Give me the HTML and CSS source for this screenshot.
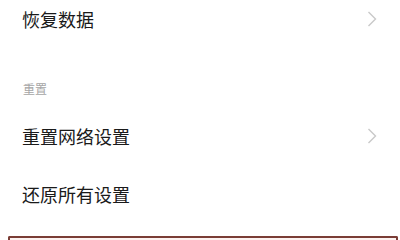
FILE: index.html
```html
<!DOCTYPE html>
<html lang="zh-CN">
<head>
<meta charset="utf-8">
<link rel="stylesheet" href="styles.css">
</head>
<body>
<div class="list">
  <div class="item">
    <span class="title">恢复数据</span>
    <svg class="chev" width="10" height="16" viewBox="0 0 10 16"><path d="M1.5 1 L8.5 8 L1.5 15" fill="none" stroke="#c9c9c9" stroke-width="1.4"/></svg>
  </div>
  <div class="section">重置</div>
  <div class="item">
    <span class="title">重置网络设置</span>
    <svg class="chev" width="10" height="16" viewBox="0 0 10 16"><path d="M1.5 1 L8.5 8 L1.5 15" fill="none" stroke="#c9c9c9" stroke-width="1.4"/></svg>
  </div>
  <div class="item">
    <span class="title">还原所有设置</span>
  </div>
  <div class="highlight"></div>
</div>
</body>
</html>
```

FILE: styles.css
```css
html, body {
  margin: 0;
  padding: 0;
  background: #ffffff;
  overflow: hidden;
}
body {
  width: 400px;
  height: 240px;
  font-family: "Noto Sans CJK SC", "Noto Sans", sans-serif;
  color: #1a1a1a;
}
.list {
  display: flex;
  flex-direction: column;
  margin-top: -10px;
}
.item {
  height: 58px;
  display: flex;
  align-items: center;
  justify-content: space-between;
  padding: 0 23px 0 22px;
}
.title {
  font-size: 18px;
  line-height: 20px;
}
.chev {
  display: block;
}
.section {
  height: 59px;
  box-sizing: border-box;
  display: flex;
  align-items: flex-end;
  padding: 0 23px 10px;
  font-size: 12px;
  line-height: 16px;
  color: #a6a6a6;
}
.highlight {
  margin: 13px 2px 0 8px;
  height: 2px;
  border: 2px solid #7a3d36;
  border-bottom: none;
  border-radius: 2px 2px 0 0;
  background: #fdf3f1;
}
```
